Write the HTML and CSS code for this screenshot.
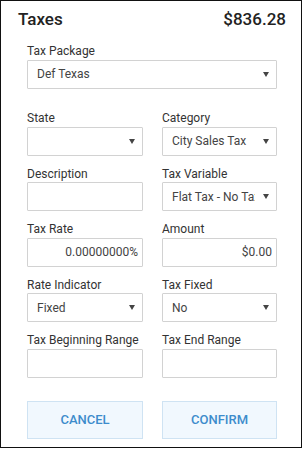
FILE: index.html
```html
<!DOCTYPE html>
<html lang="en">
<head>
<meta charset="utf-8">
<title>Taxes</title>
<link rel="stylesheet" href="styles.css">
</head>
<body>
<div class="panel">
  <div class="header">
    <span class="title">Taxes</span>
    <span class="total">$836.28</span>
  </div>
  <div class="form">
    <div class="field field-wide">
      <div class="label">Tax Package</div>
      <div class="box select"><span class="val">Def Texas</span><span class="arrow"></span></div>
    </div>
    <div class="grid">
      <div class="field">
        <div class="label">State</div>
        <div class="box select"><span class="val"></span><span class="arrow"></span></div>
      </div>
      <div class="field">
        <div class="label">Category</div>
        <div class="box select"><span class="val">City Sales Tax</span><span class="arrow"></span></div>
      </div>
      <div class="field">
        <div class="label">Description</div>
        <div class="box"></div>
      </div>
      <div class="field">
        <div class="label">Tax Variable</div>
        <div class="box select"><span class="val">Flat Tax - No Tax</span><span class="arrow"></span></div>
      </div>
      <div class="field">
        <div class="label">Tax Rate</div>
        <div class="box num">0.00000000%</div>
      </div>
      <div class="field">
        <div class="label">Amount</div>
        <div class="box num">$0.00</div>
      </div>
      <div class="field">
        <div class="label">Rate Indicator</div>
        <div class="box select"><span class="val">Fixed</span><span class="arrow"></span></div>
      </div>
      <div class="field">
        <div class="label">Tax Fixed</div>
        <div class="box select"><span class="val">No</span><span class="arrow"></span></div>
      </div>
      <div class="field">
        <div class="label">Tax Beginning Range</div>
        <div class="box"></div>
      </div>
      <div class="field">
        <div class="label">Tax End Range</div>
        <div class="box"></div>
      </div>
    </div>
    <div class="actions">
      <button class="btn">CANCEL</button>
      <button class="btn">CONFIRM</button>
    </div>
  </div>
</div>
</body>
</html>
```
FILE: styles.css
```css
html, body {
  margin: 0;
  padding: 0;
  background: #fff;
}
body {
  font-family: Roboto, "Liberation Sans", sans-serif;
  color: #333;
}
.panel {
  box-sizing: border-box;
  width: 302px;
  height: 448px;
  border: 1px solid #111;
  background: #fff;
}
.header {
  display: flex;
  justify-content: space-between;
  align-items: baseline;
  padding: 8px 15px 0 17px;
  font-size: 17px;
  line-height: 20px;
  font-weight: 500;
  color: #222;
}
.form {
  padding: 14px 24px 0 26px;
}
.field {
  min-width: 0;
}
.field-wide {
  margin-bottom: 21.5px;
}
.grid {
  display: grid;
  grid-template-columns: minmax(0, 116fr) minmax(0, 115fr);
  column-gap: 19px;
  row-gap: 10px;
}
.label {
  font-size: 12px;
  line-height: 16px;
  margin-bottom: 0.5px;
  color: #333;
  white-space: nowrap;
}
.box {
  box-sizing: border-box;
  height: 29px;
  border: 1px solid #d2d2d2;
  border-radius: 1px;
  background: #fff;
  font-size: 12px;
  color: #444;
  display: flex;
  align-items: center;
}
.select {
  padding: 0 7px 0 9px;
  gap: 8px;
}
.val {
  flex: 1;
  min-width: 0;
  overflow: hidden;
  white-space: nowrap;
}
.arrow {
  flex: none;
  width: 0;
  height: 0;
  border-left: 3px solid transparent;
  border-right: 3px solid transparent;
  border-top: 5px solid #444;
}
.num {
  justify-content: flex-end;
  padding-right: 4px;
}
.actions {
  display: grid;
  grid-template-columns: minmax(0, 116fr) minmax(0, 115fr);
  column-gap: 19px;
  margin-top: 23px;
}
.btn {
  box-sizing: border-box;
  height: 38px;
  border: 1px solid #cfe3f3;
  background: #f1f8fe;
  color: #3d8ccc;
  font-family: Roboto, "Liberation Sans", sans-serif;
  font-size: 13px;
  font-weight: 500;
  padding: 0;
  margin: 0;
  border-radius: 0;
}
```
